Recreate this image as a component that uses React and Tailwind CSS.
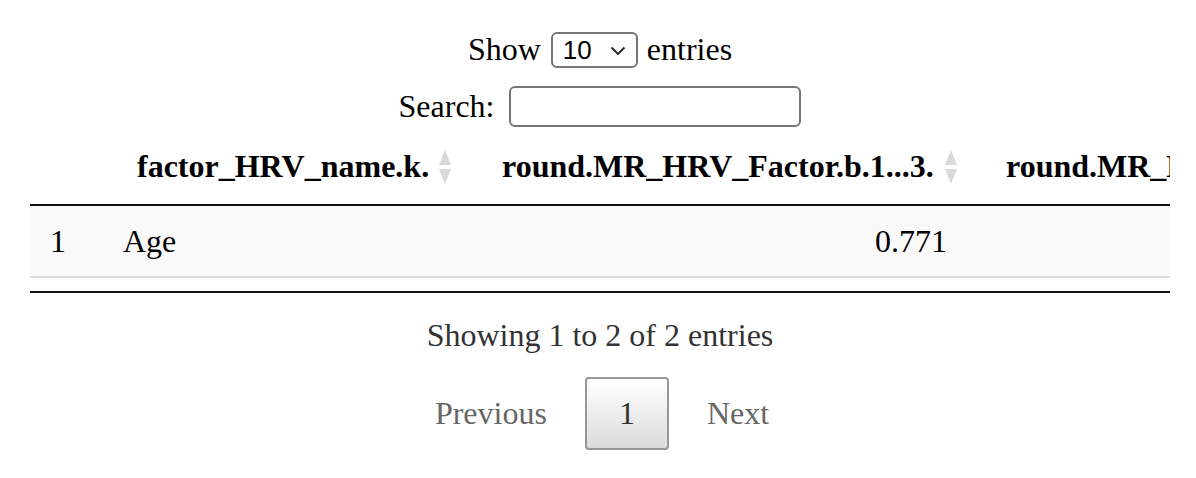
import React from 'react'

const SortIcon = () => (
    <svg width="12" height="34" viewBox="0 0 12 34" className="absolute right-[21px] top-[22px]">
        <polygon points="6,0 12,15 0,15" fill="#d9d9d9"/>
        <polygon points="0,19 12,19 6,34" fill="#d9d9d9"/>
    </svg>
)

const columns = [
    {label: '', width: 'w-[73px]', pad: ''},
    {label: 'factor_HRV_name.k.', width: 'w-[369px]', pad: 'pl-[34px]'},
    {label: 'round.MR_HRV_Factor.b.1...3.', width: 'w-[506px]', pad: 'pl-[30px]'},
    {label: 'round.MR_HRV_Factor.b.2...3.', width: 'w-[520px]', pad: 'pl-[28px]'}
]

const App = () => {
    return (
        <div className="w-[1196px] h-[478px] bg-white pt-[31px] text-[32px] text-black overflow-hidden"
             style={{fontFamily: '"Liberation Serif", "Times New Roman", serif'}}>
            <div className="flex justify-center items-center h-[37px] pl-[4px] leading-[37px]">
                <span>Show</span>
                <div className="relative ml-[10px] mr-[9px] w-[87px] h-[36px] border-2 border-[#767676] rounded-[6px] flex items-center">
                    <span className="pl-[10px] text-[26px] leading-none"
                          style={{fontFamily: '"Liberation Sans", Arial, sans-serif'}}>10</span>
                    <svg width="16" height="10" viewBox="0 0 16 10" className="absolute right-[10px] top-[12px]">
                        <path d="M1.5 1.5 L8 8 L14.5 1.5" fill="none" stroke="#222" strokeWidth="1.8"/>
                    </svg>
                </div>
                <span>entries</span>
            </div>

            <div className="flex justify-center items-center h-[41px] mt-[18px] pl-[4px] leading-[37px]">
                <span>Search:</span>
                <div className="ml-[15px] w-[292px] h-[41px] border-2 border-[#767676] rounded-[6px] bg-white"></div>
            </div>

            <div className="ml-[30px] mt-[1px] w-[1140px] overflow-hidden">
                <table className="border-collapse table-fixed w-[1468px] whitespace-nowrap">
                    <thead>
                        <tr className="border-b-2 border-[#111]">
                            {columns.map((col, i) => (
                                <th key={i}
                                    className={`relative ${col.width} ${col.pad} h-[77px] text-left font-bold leading-[37px] py-0`}>
                                    {col.label}
                                    {i > 0 && i < 3 && <SortIcon/>}
                                </th>
                            ))}
                        </tr>
                    </thead>
                    <tbody>
                        <tr className="bg-[#f9f9f9] border-b-2 border-[#dddddd]">
                            <td className="h-[72px] pl-[20px] leading-[37px]">1</td>
                            <td className="pl-[20px] leading-[37px]">Age</td>
                            <td className="pr-[31px] text-right leading-[37px]">0.771</td>
                            <td></td>
                        </tr>
                    </tbody>
                </table>
                <div className="h-[13px]"></div>
                <div className="h-[2px] bg-[#111]"></div>
            </div>

            <div className="mt-[24px] text-center leading-[37px] pl-[4px] text-[#333]">
                Showing 1 to 2 of 2 entries
            </div>

            <div className="mt-[23px] flex justify-center items-center pl-[8px] leading-[37px]">
                <div className="px-[32px] py-[16px] border-2 border-transparent text-[#666]">Previous</div>
                <div className="ml-[4px] px-[32px] py-[16px] border-2 border-[#979797] rounded-[4px] text-[#333] bg-gradient-to-b from-white to-[#dcdcdc]">1</div>
                <div className="ml-[4px] px-[32px] py-[16px] border-2 border-transparent text-[#666]">Next</div>
            </div>
        </div>
    )
}

export default App
